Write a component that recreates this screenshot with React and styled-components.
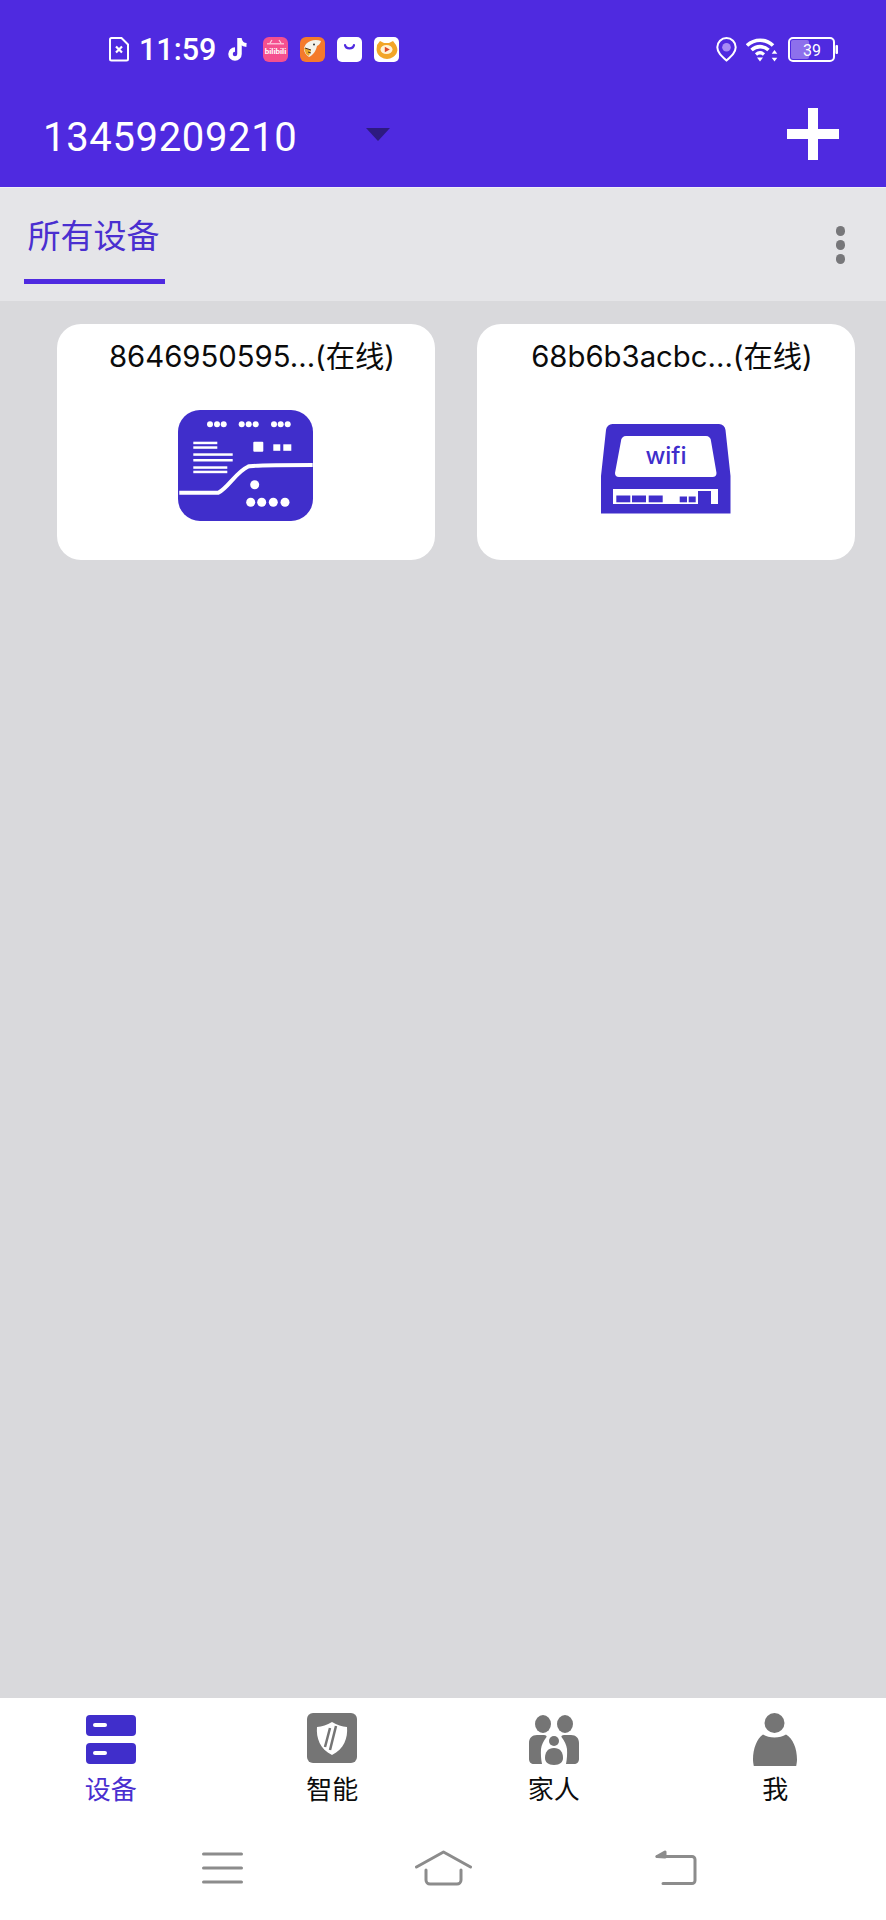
import React from 'react';
import styled, { createGlobalStyle } from 'styled-components';

const PURPLE = '#4f2ae0';
const ICON_BLUE = '#402ecb';
const GREY = '#757575';

const GlobalStyle = createGlobalStyle`
  html, body {
    margin: 0;
    padding: 0;
    background: #d9d9dc;
  }
  * {
    box-sizing: border-box;
  }
`;

const S = {
  Page: styled.div`
    width: 886px;
    height: 1920px;
    display: flex;
    flex-direction: column;
    overflow: hidden;
    font-family: Roboto, "Noto Sans CJK SC", sans-serif;
  `,
  Header: styled.header`
    height: 188px;
    background: ${PURPLE};
    padding-top: 37px;
    border-bottom: 1px solid #efeef6;
  `,
  StatusBar: styled.div`
    height: 25px;
    display: flex;
    align-items: center;
    padding: 0 48px 0 109px;
  `,
  Time: styled.span`
    margin: 0 11px 0 10px;
    font-size: 30.5px;
    font-weight: 500;
    line-height: 25px;
    color: #fff;
  `,
  AppIcons: styled.div`
    display: flex;
    gap: 12px;
    margin-left: 14px;
  `,
  StatusRight: styled.div`
    margin-left: auto;
    display: flex;
    align-items: center;
    gap: 9px;
  `,
  AccountRow: styled.div`
    margin-top: 46px;
    height: 52px;
    display: flex;
    align-items: center;
    padding: 0 47px 0 43px;
  `,
  Account: styled.span`
    width: 323px;
    margin-top: 6px;
    font-size: 40px;
    letter-spacing: 0.65px;
    color: #fff;
  `,
  Caret: styled.span`
    width: 0;
    height: 0;
    border-left: 12px solid transparent;
    border-right: 12px solid transparent;
    border-top: 13px solid #2d1a80;
  `,
  Plus: styled.svg`
    margin-left: auto;
    display: block;
  `,
  TabBar: styled.div`
    height: 113px;
    background: #e5e5e8;
    display: flex;
    justify-content: space-between;
    padding: 0 41px 0 24px;
  `,
  Tab: styled.div`
    width: 141px;
    height: 96px;
    border-bottom: 5px solid ${PURPLE};
    text-align: center;
    font-size: 33px;
    line-height: 40px;
    padding-top: 29px;
    padding-right: 2px;
    white-space: nowrap;
    color: #4a2fd0;
  `,
  Dots: styled.div`
    display: flex;
    flex-direction: column;
    gap: 4.5px;
    padding-top: 38px;
  `,
  Dot: styled.span`
    width: 9.5px;
    height: 9.5px;
    border-radius: 50%;
    background: #77777a;
  `,
  Body: styled.main`
    flex: 1;
    background: #d9d9dc;
    padding: 23px 31px 0 57px;
    display: grid;
    grid-template-columns: 378px 378px;
    grid-auto-rows: 236px;
    column-gap: 42px;
  `,
  Card: styled.article`
    background: #fff;
    border-radius: 24px;
    display: flex;
    flex-direction: column;
    align-items: center;
  `,
  CardTitle: styled.div`
    margin-top: 15px;
    margin-left: ${(p) => p.$shift}px;
    font-family: Inter, "Noto Sans CJK SC", sans-serif;
    font-size: 29.3px;
    line-height: 36px;
    white-space: nowrap;
    color: #0b0b0b;
  `,
  CardIcon: styled.svg`
    display: block;
    margin-top: ${(p) => p.$top}px;
    margin-left: ${(p) => p.$shift}px;
  `,
  BottomBar: styled.footer`
    height: 222px;
    background: #fff;
    padding-top: 15px;
  `,
  Nav: styled.nav`
    display: grid;
    grid-template-columns: repeat(4, 1fr);
  `,
  NavItem: styled.div`
    display: flex;
    flex-direction: column;
    align-items: center;
  `,
  NavIcon: styled.svg`
    display: block;
    height: 54px;
  `,
  NavLabel: styled.span`
    margin-top: 5px;
    font-family: "Noto Sans CJK SC", sans-serif;
    font-size: 26px;
    line-height: 32px;
    color: ${(p) => (p.$active ? '#4a2fd0' : '#0c0c0c')};
  `,
  SystemNav: styled.div`
    margin-top: 46px;
    display: flex;
    align-items: center;
    padding-left: 202px;
  `,
  SystemIcon: styled.svg`
    display: block;
    margin-left: ${(p) => p.$gap}px;
    fill: none;
    stroke: #8c8c8c;
    stroke-width: 3;
    stroke-linecap: round;
    stroke-linejoin: round;
  `,
};

const SimIcon = () => (
  <svg width="20" height="25" viewBox="0 0 20 25" fill="none">
    <path d="M2.5 1h10L19 7.5V22a1.5 1.5 0 0 1-1.5 1.5h-15A1.5 1.5 0 0 1 1 22V2.500A1.500 1.500 0 0 1 2.500 1z" stroke="#fff" strokeWidth="2" />
    <path d="M7 9.500l6 6M13 9.500l-6 6" stroke="#fff" strokeWidth="2.200" />
  </svg>
);

const TikTokIcon = () => (
  <svg width="22" height="25" viewBox="0 0 22 25" fill="none">
    <path d="M12.500 1v16a4.500 4.500 0 1 1-4.500-4.500" stroke="#fff" strokeWidth="4.500" />
    <path d="M13 2.500c.6 3.300 3 5.300 6.500 5.500" stroke="#fff" strokeWidth="4" />
  </svg>
);

const BiliIcon = () => (
  <svg width="25" height="25" viewBox="0 0 25 25">
    <rect width="25" height="25" rx="6" fill="#f4508f" />
    <path d="M7 6l2-3M18 6l-2-3" stroke="#fbd6e4" strokeWidth="1.200" />
    <rect x="4" y="6" width="17" height="1.500" fill="#fbb8d2" />
    <text x="12.500" y="17" textAnchor="middle" fontFamily="Roboto" fontWeight="700" fontSize="8" fill="#fff">bilibili</text>
  </svg>
);

const BirdIcon = () => (
  <svg width="25" height="25" viewBox="0 0 25 25">
    <rect width="25" height="25" rx="6" fill="#f47a2c" />
    <path d="M6 7c4-4 10-5 15-3-1 3-2 4-4 5-1 5-4 9-8 11-3-2-5-5-5-8 0-2 1-3 2-5z" fill="#f4f1ea" />
    <path d="M4 11l7 2-2 6-3-2z" fill="#e8a92a" />
    <path d="M5 11l6 2M8 15l3 1" stroke="#4a3020" strokeWidth="1" />
    <circle cx="14" cy="7.500" r="1" fill="#333" />
  </svg>
);

const BagIcon = () => (
  <svg width="25" height="25" viewBox="0 0 25 25" fill="none">
    <rect width="25" height="25" rx="5" fill="#fff" />
    <path d="M8 8c.8 4.500 8.200 4.500 9 0" stroke={PURPLE} strokeWidth="2.200" strokeLinecap="round" />
  </svg>
);

const TigerIcon = () => (
  <svg width="25" height="25" viewBox="0 0 25 25">
    <rect width="25" height="25" rx="5" fill="#fff" />
    <path d="M3 8l3-4 4 2h5l4-2 3 4c1 2 2 5 1 7-1 4-6 7-10 7s-9-3-10-7c-1-2 0-5 0-7z" fill="#f2a527" />
    <ellipse cx="12.500" cy="12.500" rx="6" ry="4.500" fill="#fff3d6" />
    <path d="M10.800 9.800l5 2.700-5 2.700z" fill="#dc4a2a" />
  </svg>
);

const PinIcon = () => (
  <svg width="21" height="25" viewBox="0 0 21 25" fill="none">
    <path d="M10.500 23.500C5 18.500 1.300 15 1.300 10.300a9.200 9.200 0 0 1 18.400 0c0 4.700-3.700 8.200-9.200 13.200z" stroke="#fff" strokeWidth="2" />
    <circle cx="10.500" cy="10.300" r="4.300" fill="#a78bf5" />
  </svg>
);

const WifiIcon = () => (
  <svg width="33" height="25" viewBox="0 0 33 25" fill="none">
    <path d="M1 8.500c7.500-7 19-7 26 0" stroke="#fff" strokeWidth="3.600" />
    <path d="M5.500 13c5-4.500 12-4.500 17 0" stroke="#fff" strokeWidth="3.600" />
    <path d="M10 17.500c2.500-2.200 5.500-2.200 8 0" stroke="#fff" strokeWidth="3.200" />
    <path d="M11 20.500h6L14 24.500z" fill="#fff" />
    <path d="M28.500 13l2.800 3.800h-5.600zM28.500 24.500l-2.800-3.800h5.600z" fill="#fff" />
  </svg>
);

const BatteryIcon = () => (
  <svg width="50" height="25" viewBox="0 0 50 25">
    <rect x="1" y="1" width="45" height="23" rx="4" fill="none" stroke="#fff" strokeWidth="2" />
    <rect x="3" y="3" width="18" height="19" rx="2" fill="#8d70ec" />
    <rect x="47.500" y="8" width="2.500" height="9" rx="1" fill="#fff" />
    <text x="24" y="18.500" textAnchor="middle" fontFamily="Roboto" fontSize="16" fill="#fff">39</text>
  </svg>
);

const BoardIcon = () => (
  <S.CardIcon $top={35} $shift={-1} width="135" height="111" viewBox="0 0 135 111">
    <rect width="135" height="111" rx="22" fill={ICON_BLUE} />
    <g fill="#fff">
      {[32, 39, 45.7, 63.7, 70.7, 77.7, 96, 102.7, 109.7].map((x) => (
        <circle key={x} cx={x} cy="14.300" r="3" />
      ))}
      <rect x="15.300" y="31.700" width="24" height="2.500" />
      <rect x="15.300" y="36.300" width="24" height="2.500" />
      <rect x="15.300" y="43.300" width="39.400" height="2.500" />
      <rect x="15.300" y="49" width="39.400" height="2.500" />
      <rect x="15.300" y="56.300" width="34" height="2.500" />
      <rect x="15.300" y="60.700" width="34" height="2.500" />
      <rect x="75.300" y="31.700" width="10" height="10" rx="1" />
      <rect x="95.300" y="34.300" width="7" height="6.500" />
      <rect x="105.300" y="34.300" width="8" height="6.500" />
      <circle cx="76.700" cy="74.700" r="4.500" />
      {[72.7, 83.7, 95.3, 107].map((x) => (
        <circle key={x} cx={x} cy="92.300" r="4.500" />
      ))}
    </g>
    <path d="M1.300 82.700H40.300C50 78 58 62 70.300 56.500c5-1.500 20-1.500 64.400-1.500" fill="none" stroke="#fff" strokeWidth="4" />
  </S.CardIcon>
);

const RouterIcon = () => (
  <S.CardIcon $top={49} $shift={0} width="130" height="90" viewBox="0 0 130 90">
    <path d="M0 89.500V52L5 6a6.500 6.500 0 0 1 6.500-6H118a6.500 6.500 0 0 1 6.500 6l5 46v37.500z" fill={ICON_BLUE} />
    <path d="M20 17a5 5 0 0 1 5-5h80a5 5 0 0 1 5 5l5.500 32a4 4 0 0 1-4 4H18a4 4 0 0 1-4-4z" fill="#fff" />
    <text x="65" y="40" textAnchor="middle" fontFamily="Inter, sans-serif" fontWeight="500" fontSize="24" fill={ICON_BLUE}>wifi</text>
    <rect x="12" y="65" width="105" height="15" fill="#fff" />
    <g fill={ICON_BLUE}>
      <rect x="15.300" y="71.500" width="14" height="6.800" />
      <rect x="31" y="71.500" width="14" height="6.800" />
      <rect x="47.700" y="71.500" width="14" height="6.800" />
      <rect x="78.700" y="72.500" width="7.300" height="5.800" />
      <rect x="87.700" y="72.500" width="7" height="5.800" />
      <rect x="97" y="67" width="13" height="13" />
    </g>
  </S.CardIcon>
);

const DeviceNavIcon = () => (
  <S.NavIcon width="50" viewBox="0 0 50 54">
    <rect y="2" width="50" height="21" rx="4" fill={ICON_BLUE} />
    <rect y="30" width="50" height="21" rx="4" fill={ICON_BLUE} />
    <rect x="7" y="10" width="14" height="4" rx="2" fill="#fff" />
    <rect x="7" y="38" width="14" height="4" rx="2" fill="#fff" />
  </S.NavIcon>
);

const ShieldNavIcon = () => (
  <S.NavIcon width="50" viewBox="0 0 50 54">
    <rect width="50" height="50" rx="6" fill={GREY} />
    <path d="M25 9c5 3 10 4.500 15 5 1 11-3 22-15 28C13 36 9 25 10 14c5-.5 10-2 15-5z" fill="#fff" />
    <path d="M23 15l-5 19M29 13l-6 24" stroke={GREY} strokeWidth="2.500" />
  </S.NavIcon>
);

const FamilyNavIcon = () => (
  <S.NavIcon width="50" viewBox="0 0 50 54">
    <g fill={GREY}>
      <ellipse cx="14" cy="11" rx="8" ry="9" />
      <ellipse cx="36" cy="11" rx="8" ry="9" />
      <path d="M8 22h7c2 0 3 1 2.500 2-3 4-5 8-5.500 12-.3 5 0 10 1 15H5c-3 0-5-2-5-5V30c0-5 3-8 8-8z" />
      <path d="M42 22h-7c-2 0-3 1-2.500 2 3 4 5 8 5.500 12 .3 5 0 10-1 15h8c3 0 5-2 5-5V30c0-5-3-8-8-8z" />
      <circle cx="25" cy="28" r="5" />
      <path d="M25 35c6 0 9 4 9 10 0 4-3 7-9 7s-9-3-9-7c0-6 3-10 9-10z" />
    </g>
  </S.NavIcon>
);

const MeNavIcon = () => (
  <S.NavIcon width="44" viewBox="0 0 44 54">
    <circle cx="21.500" cy="10" r="10" fill={GREY} />
    <path d="M10 21.500c6 4 17 4 23 0 7 4 11 14 11 25 0 2-.300 4-.800 6.500H.8C.3 50.500 0 48.500 0 46.500c0-11 4-21 10-25z" fill={GREY} />
  </S.NavIcon>
);

const navItems = [
  { label: '设备', Icon: DeviceNavIcon, active: true },
  { label: '智能', Icon: ShieldNavIcon },
  { label: '家人', Icon: FamilyNavIcon },
  { label: '我', Icon: MeNavIcon },
];

const App = () => {
  return (
    <S.Page>
      <GlobalStyle />
      <S.Header>
        <S.StatusBar>
          <SimIcon />
          <S.Time>11:59</S.Time>
          <TikTokIcon />
          <S.AppIcons>
            <BiliIcon />
            <BirdIcon />
            <BagIcon />
            <TigerIcon />
          </S.AppIcons>
          <S.StatusRight>
            <PinIcon />
            <WifiIcon />
            <BatteryIcon />
          </S.StatusRight>
        </S.StatusBar>
        <S.AccountRow>
          <S.Account>13459209210</S.Account>
          <S.Caret />
          <S.Plus width="52" height="52" viewBox="0 0 52 52">
            <path d="M21 0h10v21h21v10H31v21H21V31H0V21h21z" fill="#fff" />
          </S.Plus>
        </S.AccountRow>
      </S.Header>

      <S.TabBar>
        <S.Tab>所有设备</S.Tab>
        <S.Dots>
          <S.Dot />
          <S.Dot />
          <S.Dot />
        </S.Dots>
      </S.TabBar>

      <S.Body>
        <S.Card>
          <S.CardTitle $shift={12}>8646950595...(在线)</S.CardTitle>
          <BoardIcon />
        </S.Card>
        <S.Card>
          <S.CardTitle $shift={12}>68b6b3acbc...(在线)</S.CardTitle>
          <RouterIcon />
        </S.Card>
      </S.Body>

      <S.BottomBar>
        <S.Nav>
          {navItems.map(({ label, Icon, active }) => (
            <S.NavItem key={label}>
              <Icon />
              <S.NavLabel $active={active}>{label}</S.NavLabel>
            </S.NavItem>
          ))}
        </S.Nav>
        <S.SystemNav>
          <S.SystemIcon $gap={0} width="41" height="32" viewBox="0 0 41 32">
            <path d="M1.500 2h38M1.500 16h38M1.500 30h38" />
          </S.SystemIcon>
          <S.SystemIcon $gap={172} width="57" height="36" viewBox="0 0 57 36">
            <path d="M1.500 17L28.500 2l27 15M11 20v10a4 4 0 0 0 4 4h27a4 4 0 0 0 4-4V20" />
          </S.SystemIcon>
          <S.SystemIcon $gap={183} width="42" height="36" viewBox="0 0 42 36">
            <path d="M2 6.500h35a3 3 0 0 1 3 3v21a3 3 0 0 1-3 3H8" />
            <path d="M2 6.500L10 2v5z" fill="#8c8c8c" />
          </S.SystemIcon>
        </S.SystemNav>
      </S.BottomBar>
    </S.Page>
  );
};

export default App;
